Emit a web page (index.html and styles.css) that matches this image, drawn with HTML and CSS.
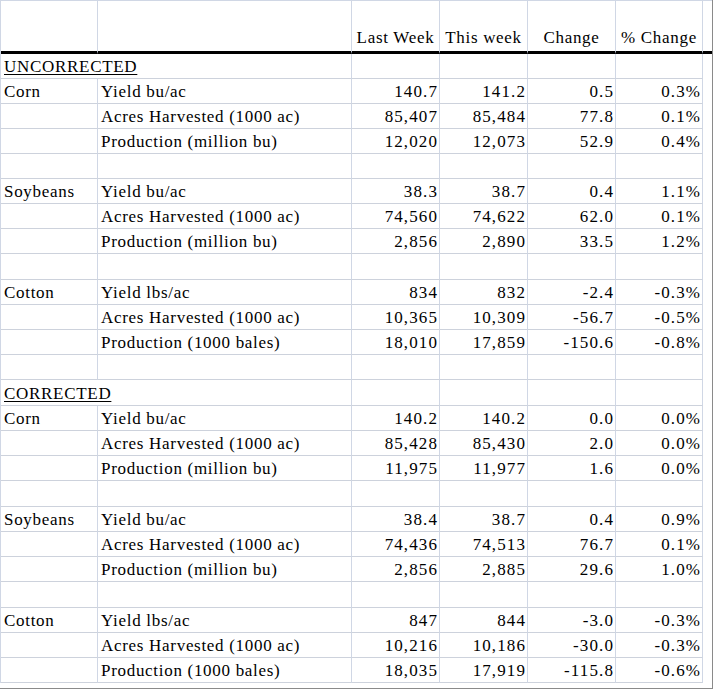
FILE: index.html
```html
<!DOCTYPE html>
<html>
<head>
<meta charset="utf-8">
<link rel="stylesheet" href="styles.css">
</head>
<body>
<div class="frame">
<table class="sheet">
<colgroup>
<col class="c-crop"><col class="c-item"><col class="c-num"><col class="c-num"><col class="c-num"><col class="c-pct"><col class="c-pad">
</colgroup>
<thead>
<tr class="head">
<th></th><th></th><th>Last Week</th><th>This week</th><th>Change</th><th>% Change</th><th class="pad"></th>
</tr>
</thead>
<tbody>
<tr><td colspan="2" class="sec">UNCORRECTED</td><td></td><td></td><td></td><td></td><td class="pad"></td></tr>
<tr><td>Corn</td><td>Yield bu/ac</td><td class="n">140.7</td><td class="n">141.2</td><td class="n">0.5</td><td class="n">0.3%</td><td class="pad"></td></tr>
<tr><td></td><td>Acres Harvested (1000 ac)</td><td class="n">85,407</td><td class="n">85,484</td><td class="n">77.8</td><td class="n">0.1%</td><td class="pad"></td></tr>
<tr><td></td><td>Production (million bu)</td><td class="n">12,020</td><td class="n">12,073</td><td class="n">52.9</td><td class="n">0.4%</td><td class="pad"></td></tr>
<tr><td></td><td></td><td></td><td></td><td></td><td></td><td class="pad"></td></tr>
<tr><td>Soybeans</td><td>Yield bu/ac</td><td class="n">38.3</td><td class="n">38.7</td><td class="n">0.4</td><td class="n">1.1%</td><td class="pad"></td></tr>
<tr><td></td><td>Acres Harvested (1000 ac)</td><td class="n">74,560</td><td class="n">74,622</td><td class="n">62.0</td><td class="n">0.1%</td><td class="pad"></td></tr>
<tr><td></td><td>Production (million bu)</td><td class="n">2,856</td><td class="n">2,890</td><td class="n">33.5</td><td class="n">1.2%</td><td class="pad"></td></tr>
<tr class="tall"><td></td><td></td><td></td><td></td><td></td><td></td><td class="pad"></td></tr>
<tr><td>Cotton</td><td>Yield lbs/ac</td><td class="n">834</td><td class="n">832</td><td class="n">-2.4</td><td class="n">-0.3%</td><td class="pad"></td></tr>
<tr><td></td><td>Acres Harvested (1000 ac)</td><td class="n">10,365</td><td class="n">10,309</td><td class="n">-56.7</td><td class="n">-0.5%</td><td class="pad"></td></tr>
<tr><td></td><td>Production (1000 bales)</td><td class="n">18,010</td><td class="n">17,859</td><td class="n">-150.6</td><td class="n">-0.8%</td><td class="pad"></td></tr>
<tr><td></td><td></td><td></td><td></td><td></td><td></td><td class="pad"></td></tr>
<tr class="tall"><td colspan="2" class="sec">CORRECTED</td><td></td><td></td><td></td><td></td><td class="pad"></td></tr>
<tr><td>Corn</td><td>Yield bu/ac</td><td class="n">140.2</td><td class="n">140.2</td><td class="n">0.0</td><td class="n">0.0%</td><td class="pad"></td></tr>
<tr><td></td><td>Acres Harvested (1000 ac)</td><td class="n">85,428</td><td class="n">85,430</td><td class="n">2.0</td><td class="n">0.0%</td><td class="pad"></td></tr>
<tr><td></td><td>Production (million bu)</td><td class="n">11,975</td><td class="n">11,977</td><td class="n">1.6</td><td class="n">0.0%</td><td class="pad"></td></tr>
<tr class="tall"><td></td><td></td><td></td><td></td><td></td><td></td><td class="pad"></td></tr>
<tr><td>Soybeans</td><td>Yield bu/ac</td><td class="n">38.4</td><td class="n">38.7</td><td class="n">0.4</td><td class="n">0.9%</td><td class="pad"></td></tr>
<tr><td></td><td>Acres Harvested (1000 ac)</td><td class="n">74,436</td><td class="n">74,513</td><td class="n">76.7</td><td class="n">0.1%</td><td class="pad"></td></tr>
<tr><td></td><td>Production (million bu)</td><td class="n">2,856</td><td class="n">2,885</td><td class="n">29.6</td><td class="n">1.0%</td><td class="pad"></td></tr>
<tr class="tall"><td></td><td></td><td></td><td></td><td></td><td></td><td class="pad"></td></tr>
<tr><td>Cotton</td><td>Yield lbs/ac</td><td class="n">847</td><td class="n">844</td><td class="n">-3.0</td><td class="n">-0.3%</td><td class="pad"></td></tr>
<tr><td></td><td>Acres Harvested (1000 ac)</td><td class="n">10,216</td><td class="n">10,186</td><td class="n">-30.0</td><td class="n">-0.3%</td><td class="pad"></td></tr>
<tr><td></td><td>Production (1000 bales)</td><td class="n">18,035</td><td class="n">17,919</td><td class="n">-115.8</td><td class="n">-0.6%</td><td class="pad"></td></tr>
</tbody>
</table>
</div>
</body>
</html>
```
FILE: styles.css
```css
html, body {
  margin: 0;
  padding: 0;
  background: #ffffff;
}

.frame {
  width: 712px;
  padding-bottom: 5px;
  border-right: 1px solid #8a8a8a;
  border-bottom: 1px solid #8a8a8a;
}

.sheet {
  table-layout: fixed;
  width: 712px;
  border-collapse: separate;
  border-spacing: 0;
  border-top: 1px solid #d0d7e5;
  border-left: 1px solid #d0d7e5;
  font-family: "Liberation Serif", "Times New Roman", serif;
  font-size: 17px;
  color: #000000;
}

.c-crop { width: 97px; }
.c-item { width: 254px; }
.c-num { width: 88px; }
.c-pct { width: 87px; }
.c-pad { width: 9px; }

.sheet th,
.sheet td {
  padding: 0 2px 2px 3px;
  line-height: 18px;
  vertical-align: bottom;
  white-space: nowrap;
  overflow: visible;
  letter-spacing: 0.7px;
  border-right: 1px solid #d0d7e5;
  border-bottom: 1px solid #cdd2dc;
  font-weight: normal;
  text-align: left;
}

.sheet tbody tr {
  height: 25px;
}

.sheet tbody tr.tall {
  height: 26px;
}

.sheet tr.head {
  height: 53px;
}

.sheet th {
  text-align: center;
  padding-left: 0;
  padding-right: 0;
  padding-bottom: 4px;
  border-bottom: 3px solid #000000;
}

.sheet td.n {
  text-align: right;
  letter-spacing: 1.1px;
  padding-right: 1px;
}

.sheet td.sec {
  text-decoration: underline;
  text-decoration-thickness: 1px;
  text-underline-offset: 2px;
}

.sheet td.pad {
  border-right: none;
  border-bottom: none;
  padding: 0;
}

.sheet th.pad {
  border-right: none;
  padding: 0;
}
```
